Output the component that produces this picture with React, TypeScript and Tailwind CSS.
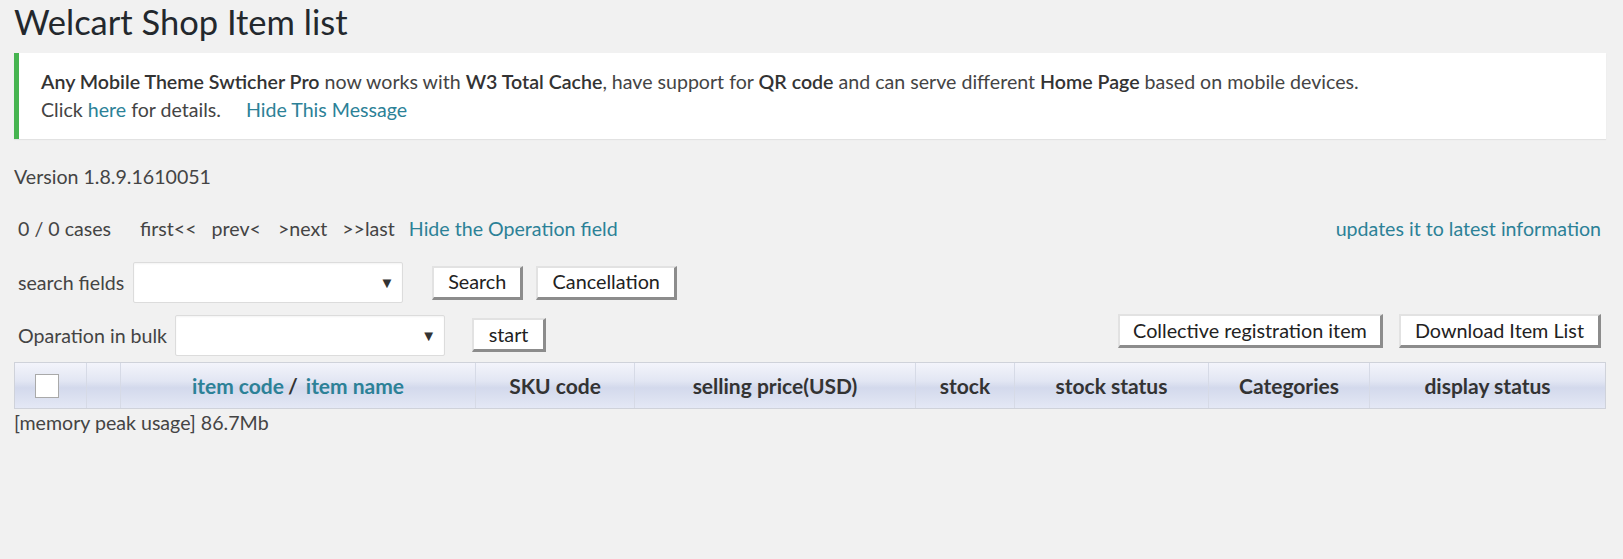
import React from 'react';

const font = { fontFamily: 'Lato, "Open Sans", sans-serif' };

// 3D-looking button like the old admin screen
function Btn({ children, className = '' }: { children: React.ReactNode; className?: string }) {
  return (
    <button
      className={`flex h-[34px] items-center justify-center border-t-2 border-l-2 border-r-[3px] border-b-[3px] border-t-[#e2e2e2] border-l-[#e2e2e2] border-r-[#8c8c8c] border-b-[#8c8c8c] bg-white text-[19.8px] text-[#222] ${className}`}
    >
      {children}
    </button>
  );
}

function FakeSelect() {
  return (
    <div className="flex h-[41px] w-[270px] items-center justify-end rounded-[2px] border border-[#dcdcdc] bg-white pr-[8px] shadow-[inset_0_1px_2px_rgba(0,0,0,0.05)]">
      <span className="text-[15px] leading-none text-[#333]">▼</span>
    </div>
  );
}

const columns: { w: string; label?: React.ReactNode }[] = [
  { w: 'w-[72px]' },
  { w: 'w-[34px]' },
  {
    w: 'w-[355px]',
    label: (
      <>
        <span className="text-[#2c8197]">item code</span>
        <span className="ml-[4px] mr-[8px]">/</span>
        <span className="text-[#2c8197]">item name</span>
      </>
    ),
  },
  { w: 'w-[159px]', label: 'SKU code' },
  { w: 'w-[281px]', label: 'selling price(USD)' },
  { w: 'w-[99px]', label: 'stock' },
  { w: 'w-[194px]', label: 'stock status' },
  { w: 'w-[161px]', label: 'Categories' },
  { w: 'flex-1', label: 'display status' },
];

export default function App() {
  return (
    <div className="min-h-[559px] bg-[#f1f1f1] pl-[14px] pr-[17px] text-[19.6px] text-[#444]" style={font}>
      <h1 className="text-[34.5px] leading-[44px] text-[#23282d]">Welcart Shop Item list</h1>

      {/* Notice */}
      <div className="mt-[9px] border-l-[5px] border-[#46b450] bg-white py-[15px] pl-[22px] leading-[28px] shadow-[0_1px_1px_rgba(0,0,0,0.06)]">
        <p>
          <b className="font-semibold text-[#333]">Any Mobile Theme Swticher Pro</b> now works with{' '}
          <b className="font-semibold text-[#333]">W3 Total Cache</b>, have support for{' '}
          <b className="font-semibold text-[#333]">QR code</b> and can serve different{' '}
          <b className="font-semibold text-[#333]">Home Page</b> based on mobile devices.
        </p>
        <p>
          Click <a className="text-[#2c8197]">here</a> for details.
          <a className="ml-[25px] text-[#2c8197]">Hide This Message</a>
        </p>
      </div>

      <div className="mt-[24px] leading-[28px]">Version 1.8.9.1610051</div>

      {/* Navigation */}
      <div className="mt-[24px] flex items-center leading-[28px]">
        <span className="ml-[4px]">0 / 0 cases</span>
        <span className="ml-[29px]">first&lt;&lt;</span>
        <span className="ml-[15px]">prev&lt;</span>
        <span className="ml-[17px]">&gt;next</span>
        <span className="ml-[15px]">&gt;&gt;last</span>
        <a className="ml-[14px] text-[#2c8197]">Hide the Operation field</a>
        <a className="ml-auto mr-[5px] text-[#2c8197]">updates it to latest information</a>
      </div>

      {/* Search */}
      <div className="mt-[19px] flex items-center">
        <span className="ml-[4px] mr-[9px]">search fields</span>
        <FakeSelect />
        <Btn className="ml-[29px] w-[91px]">Search</Btn>
        <Btn className="ml-[13px] w-[141px]">Cancellation</Btn>
      </div>

      {/* Bulk operation */}
      <div className="mt-[11px] flex items-start">
        <div className="mt-[1px] flex items-center">
          <span className="ml-[4px] mr-[8px]">Oparation in bulk</span>
          <FakeSelect />
        </div>
        <Btn className="ml-[27px] mt-[4px] w-[74px]">start</Btn>
        <Btn className="ml-auto w-[265px]">Collective registration item</Btn>
        <Btn className="ml-[16px] mr-[5px] w-[202px]">Download Item List</Btn>
      </div>

      {/* Table header */}
      <div className="mt-[6px] flex h-[47px] border border-[#cfd2da] bg-[linear-gradient(to_bottom,#f3f4fb_0%,#e2e6f3_40%,#d3d9ec_55%,#e4e8f5_100%)] text-[21px] font-bold text-[#333]">
        {columns.map((c, i) => (
          <div
            key={i}
            className={`flex items-center justify-center ${c.w} ${i < columns.length - 1 ? 'border-r border-[#d6dae6]' : ''}`}
          >
            {i === 0 ? <span className="ml-[-8px] h-[24px] w-[24px] border border-[#a9a9a9] bg-white" /> : c.label}
          </div>
        ))}
      </div>

      <div className="leading-[28px]">[memory peak usage] 86.7Mb</div>
    </div>
  );
}
